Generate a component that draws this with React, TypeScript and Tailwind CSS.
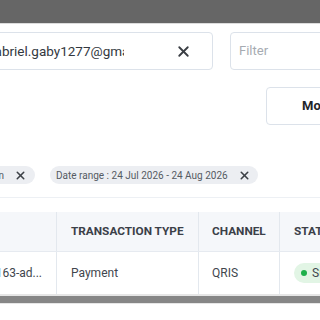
import { X } from "lucide-react";

function Chip({ label, className }: { label: string; className?: string }) {
  return (
    <div
      className={`flex h-[18px] shrink-0 items-center gap-[10px] rounded-full bg-[#eceef2] pl-[6px] pr-[8px] text-[10px] text-[#555b63] ${className ?? ""}`}
    >
      <span className="whitespace-nowrap">{label}</span>
      <X size={13} strokeWidth={2.8} className="shrink-0 text-[#3c4046]" />
    </div>
  );
}

export default function App() {
  return (
    <div className="h-[320px] w-[320px] overflow-hidden bg-white font-['Roboto',sans-serif]">
      <div className="h-[24px] border-b border-[#dcdcdc] bg-[#666666]" />

      <div className="ml-[-26px] mt-[8px] flex gap-[17px]">
        <div className="flex h-[38px] w-[239px] shrink-0 items-center rounded-[4px] border border-[#dce2ea] pl-[12px] pr-[20px]">
          <span className="w-[137px] overflow-hidden whitespace-nowrap text-[13.5px] text-[#333840]">
            gabriel.gaby1277@gmail.com
          </span>
          <X size={17} strokeWidth={2.6} className="ml-auto text-[#3a3e44]" />
        </div>
        <div className="flex h-[38px] w-[200px] shrink-0 items-center rounded-[4px] border border-[#dce2ea] px-[8px] text-[13px] text-[#a6abb2]">
          Filter
        </div>
      </div>

      <div className="ml-[266px] mt-[17px] flex h-[38px] w-[150px] shrink-0 items-center rounded-[4px] border border-[#dce2ea] pl-[35px] text-[13px] font-bold text-[#23262b]">
        <span className="whitespace-nowrap">More filters</span>
      </div>

      <div className="ml-[-95px] mt-[41px] flex gap-[15px]">
        <Chip label="Type : Transaction" className="w-[130px] justify-end" />
        <Chip label="Date range : 24 Jul 2026 - 24 Aug 2026" className="w-[208px] justify-between" />
      </div>

      <div className="mt-[13px] h-px bg-[#edf0f4]" />

      <div className="mt-[14px] ml-[-100px] w-[520px]">
        <div className="flex h-[40px] border-b border-[#e6eaf0] bg-[#f5f7fa] text-[11.8px] font-bold uppercase text-[#3b4048]">
          <div className="w-[157px] shrink-0 border-r border-[#e3e8ee]" />
          <div className="flex w-[142px] shrink-0 items-center border-r border-[#e3e8ee] pl-[14px]">Transaction Type</div>
          <div className="flex w-[81px] shrink-0 items-center border-r border-[#e3e8ee] pl-[13px]">Channel</div>
          <div className="flex flex-1 items-center pl-[14px]">Status</div>
        </div>
        <div className="flex h-[42px] text-[12px] text-[#41464d]">
          <div className="flex w-[157px] shrink-0 items-center justify-end overflow-hidden border-r border-[#e3e8ee] pr-[14px]">
            <span className="whitespace-nowrap">a3c9e1f2-7b4d-4163-ad...</span>
          </div>
          <div className="flex w-[142px] shrink-0 items-center border-r border-[#e3e8ee] pl-[14px]">Payment</div>
          <div className="flex w-[81px] shrink-0 items-center border-r border-[#e3e8ee] pl-[13px]">QRIS</div>
          <div className="flex flex-1 items-center pl-[14px]">
            <div className="flex h-[20px] items-center gap-[5px] rounded-full bg-[#e2f5e5] pl-[7px] pr-[10px]">
              <span className="h-[6px] w-[6px] rounded-full bg-[#1db04a]" />
              <span>Success</span>
            </div>
          </div>
        </div>
      </div>

      <div className="flex h-[10px] items-center bg-[#e6e6e6]">
        <div className="h-[7px] w-full bg-[#868686]" />
      </div>
    </div>
  );
}
